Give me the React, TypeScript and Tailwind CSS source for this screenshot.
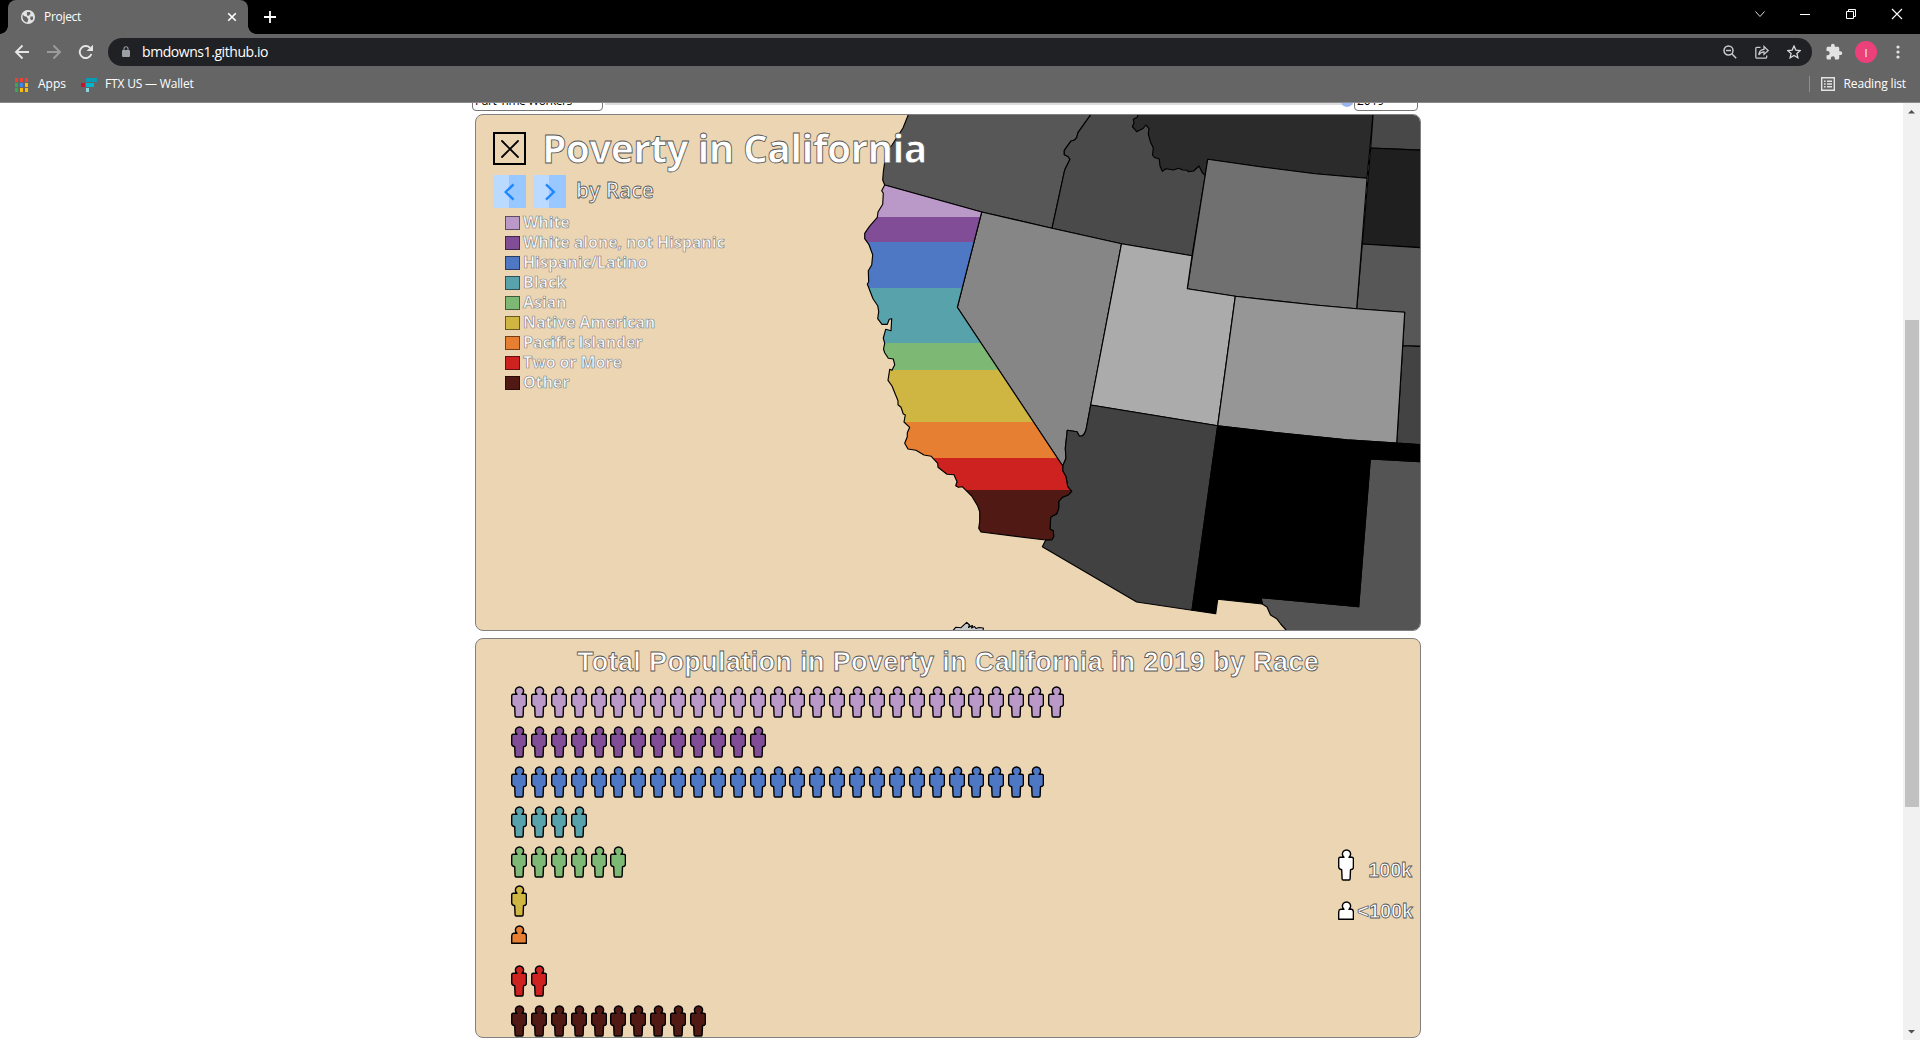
import React from 'react';

const C = {
  white: '#ba98c8',
  purple: '#824d97',
  blue: '#4e78c4',
  teal: '#58a2ac',
  green: '#7eb875',
  yellow: '#cfb541',
  orange: '#e77f33',
  red: '#cd2220',
  dark: '#511913',
};

const legend: [string, string][] = [
  ['White', C.white],
  ['White alone, not Hispanic', C.purple],
  ['Hispanic/Latino', C.blue],
  ['Black', C.teal],
  ['Asian', C.green],
  ['Native American', C.yellow],
  ['Pacific Islander', C.orange],
  ['Two or More', C.red],
  ['Other', C.dark],
];

const rows: { color: string; count: number; half?: boolean }[] = [
  { color: C.white, count: 28 },
  { color: C.purple, count: 13 },
  { color: C.blue, count: 27 },
  { color: C.teal, count: 4 },
  { color: C.green, count: 6 },
  { color: C.yellow, count: 1 },
  { color: C.orange, count: 1, half: true },
  { color: C.red, count: 2 },
  { color: C.dark, count: 10 },
];

const CALIFORNIA =
  '884.7,185 881.7,190.7 883.3,193.3 882.7,204.3 878,212 877.3,217.3 869.3,226.7 864.7,233.3 864.7,238.7 869,244.7 872.7,254.7 871.7,265 868.3,270.7 868.7,282 867.3,284 873,298.7 877.7,305.7 878.7,311.7 877.7,318.7 882,324.3 887.3,324.3 889.3,319.3 891.7,318.7 891,330.7 885.7,329.3 883.3,338 884.7,343.3 883.5,349 884.7,352.7 888.3,358.3 893.3,359 894.7,364.7 892,370.3 889.7,369.3 888,380.3 892,386 898,400.7 898,404.7 901,407.3 903.3,414 905.3,415 904,422 909.7,427.3 907.3,432.7 907.3,436.7 904.7,443.3 908,449 916,450.3 924,455 931.3,456.3 937.7,463.3 938,467.3 947,474.3 954,474.7 957,481.7 955.7,485.7 958.3,487.3 962.3,486.7 971.7,496 977.7,506 979.7,511.7 979.7,521.7 978.7,528.3 981,532 1043.3,539.7 1051.7,539.7 1053.7,536.7 1053.3,530.7 1050,529.3 1050.7,517 1056.7,513.7 1058.7,508.3 1058.7,501.3 1062.3,497.3 1067.7,495.3 1071.7,491.3 1067.7,486.7 1066,476.7 1062.7,470.7 1062.7,466 957.3,307.3 981.7,212';

const states: [string, string][] = [
  ['#575757', '909,113 903,128 892,145 886,152 885,160 883.3,172 882.7,180 884.7,185 981.7,212 1052,228.3 1064.7,170 1070,159.3 1068,156.5 1064.3,154.7 1064.3,150.3 1070.7,141.3 1074.5,140 1076.7,137.7 1078,132.7 1081.7,127.3 1092,113'],
  ['#4a4a4a', '1092,113 1081.7,127.3 1078,132.7 1076.7,137.7 1074.5,140 1070.7,141.3 1064.3,150.3 1064.3,154.7 1068,156.5 1070,159.3 1064.7,170 1052,228.3 1121.5,243.7 1192,255.7 1205.3,175.3 1207,113'],
  ['#2b2b2b', '1138,113 1137.5,117 1133.3,119.3 1134,123 1132.3,126.7 1136.7,131.7 1143,128.5 1146,125 1149,128.7 1148.3,134 1150.5,142 1153.3,148 1152.5,155 1154.5,157.5 1159.3,159 1160,166 1162.3,171.3 1166,168.7 1173.3,170 1178.7,168.3 1182.7,170 1187,170.2 1188.7,171.7 1193.7,171 1199,166 1202.3,172.7 1205.3,175.3 1207.7,159.3 1260,166.7 1315,173.7 1367,178.3 1373.2,113'],
  ['#484848', '1373.2,113 1370.7,148 1422,150.2 1422,113'],
  ['#1f1f1f', '1370.7,148 1422,150.2 1422,247.8 1362.3,244'],
  ['#575757', '1362.3,244 1422,247.8 1422,346.5 1402.7,345.7 1404.7,312.3 1356.7,308.7'],
  ['#434343', '1402.7,345.7 1422,346.5 1422,445 1396.7,443'],
  ['#707070', '1207.7,159.3 1260,166.7 1315,173.7 1367,178.3 1356.7,308.7 1315,305 1235.3,296.3 1187.3,288.7'],
  ['#868686', '981.7,212 1052,228.3 1121.5,243.7 1090.7,405 1086,430 1084.5,433.5 1082.3,436 1079.3,436 1077,431.7 1067.3,430.3 1065.3,448.3 1066,458.3 1062.7,466 957.3,307.3'],
  ['#ababab', '1121.5,243.7 1192,255.7 1187.3,288.7 1235.3,296.3 1217.7,425.7 1090.7,405'],
  ['#969696', '1235.3,296.3 1315,305 1356.7,308.7 1404.7,312.3 1396.7,443 1346.7,439.7 1273.3,432.3 1217.7,425.7'],
  ['#414141', '1090.7,405 1217.7,425.7 1192,610.3 1136.7,602 1042.3,546.7 1045.7,540 1051.7,539.7 1053.7,536.7 1053.3,530.7 1050,529.3 1050.7,517 1056.7,513.7 1058.7,508.3 1058.7,501.3 1062.3,497.3 1067.7,495.3 1071.7,491.3 1067.7,486.7 1066,476.7 1062.7,470.7 1062.7,466 1066,458.3 1065.3,448.3 1067.3,430.3 1077,431.7 1079.3,436 1082.3,436 1084.5,433.5 1086,430'],
  ['#545454', '1370.3,459 1422,461.7 1422,634 1289,634 1286,630 1280.7,624 1276.7,618.7 1270.5,615 1267,607 1262.3,604 1261,597.7 1358.7,606.7'],
  ['#000000', '1217.7,425.7 1273.3,432.3 1346.7,439.7 1396.7,443 1422,444.7 1422,461.7 1370.3,459 1358.7,606.7 1261,597.7 1262.3,604 1217.7,599.3 1215.7,613.7 1192,610.3'],
  ['#c9c9c9', '951,633 955.7,627.3 961,627.7 966.7,622.3 969.5,625 968.5,627.5 971,626 972.5,625.5 971.5,628 974.5,626.5 976,628.5 979,627.5 983.3,628 983,633'],
];

const bands: [number, number, string][] = [
  [180, 217, C.white],
  [217, 242, C.purple],
  [242, 288, C.blue],
  [288, 343, C.teal],
  [343, 370, C.green],
  [370, 422, C.yellow],
  [422, 458, C.orange],
  [458, 490, C.red],
  [490, 545, C.dark],
];

function WestMap() {
  return (
    <svg viewBox="476 115 944 515" className="absolute inset-0 h-full w-full">
      <defs>
        <clipPath id="ca">
          <polygon points={CALIFORNIA} />
        </clipPath>
      </defs>
      <g stroke="#000" strokeWidth="1.15" strokeLinejoin="round">
        {states.map(([fill, points]) => (
          <polygon key={points} points={points} fill={fill} />
        ))}
      </g>
      <g clipPath="url(#ca)" shapeRendering="crispEdges">
        {bands.map(([y0, y1, fill]) => (
          <rect key={fill} x="860" y={y0} width="215" height={y1 - y0} fill={fill} />
        ))}
      </g>
      <polygon points={CALIFORNIA} fill="none" stroke="#000" strokeWidth="1.15" strokeLinejoin="round" />
    </svg>
  );
}

function Person({ color, half }: { color: string; half?: boolean }) {
  return (
    <svg viewBox="0 0 16 32" className="h-8 w-4 shrink-0" fill={color} stroke="#000" strokeWidth="1.4" strokeLinejoin="round">
      {half ? (
        <path d="M6 8.3 A4.1 4.1 0 1 1 11 8.3 H13.6 Q15.4 8.7 15.4 11 V18.3 H.7 V11 Q.8 8.6 2.6 8.3 Z" />
      ) : (
        <path d="M6 8.3 A4.1 4.1 0 1 1 11 8.3 H14 Q15.4 8.4 15.4 9.8 V18.6 Q15.3 20.6 12.5 20.8 L12.1 30 Q12 31 11.2 31 H5.1 Q4.2 31 4.1 30 L3.7 20.8 Q.8 20.2 .7 18 V9.8 Q.8 8.4 2.1 8.3 Z" />
      )}
    </svg>
  );
}

function TabBar() {
  return (
    <div className="flex h-[34px] bg-black text-white">
      <div className="relative ml-2 flex h-[34px] w-60 items-center rounded-t-lg bg-[#656565] pl-[13px] pr-[10px]">
        <span className="absolute -left-2 bottom-0 h-2 w-2 bg-[radial-gradient(circle_at_0_0,#000_7.5px,#656565_8px)]" />
        <span className="absolute -right-2 bottom-0 h-2 w-2 bg-[radial-gradient(circle_at_100%_0,#000_7.5px,#656565_8px)]" />
        <svg viewBox="0 0 14 14" className="h-[14px] w-[14px]">
          <circle cx="7" cy="7" r="7" fill="#e3e4e6" />
          <path d="M2 4.2 Q2.6 6.6 4.6 6.6 Q6.4 6.8 6.3 8.3 Q7.8 8.6 7.2 10 L6.2 12.4 Q2.4 11.8 1.6 8 Q1.2 6 2 4.2 Z M6 2 H9 L9.6 4 Q8.2 4.4 8 5.8 H6.4 Q5.4 4.6 6 2 Z M9.4 6.6 H12 Q12.6 8.8 11 10.6 Q10.2 9.6 9.2 9.2 Z" fill="#656565" />
        </svg>
        <span className="ml-[9px] flex-1 text-xs tracking-[-0.3px]">Project</span>
        <svg viewBox="0 0 12 12" className="h-3 w-3" stroke="#fff" strokeWidth="1.6">
          <path d="M2.2 2.2 L9.8 9.8 M9.8 2.2 L2.2 9.8" />
        </svg>
      </div>
      <svg viewBox="0 0 12 12" className="ml-4 mt-[11px] h-3 w-3" stroke="#fff" strokeWidth="1.8">
        <path d="M6 0 V12 M0 6 H12" />
      </svg>
      <div className="ml-auto mr-[17px] mt-2 flex h-3 items-center gap-[34.5px]">
        <svg viewBox="0 0 12 12" className="h-3 w-3" fill="none" stroke="#ddd">
          <path d="M1.5 3.5 L6 8.5 L10.5 3.5" />
        </svg>
        <svg viewBox="0 0 10 12" className="h-3 w-[10px]" stroke="#fff">
          <path d="M0 6.5 H10" />
        </svg>
        <svg viewBox="0 0 12 12" className="h-3 w-3" fill="none" stroke="#fff">
          <path d="M1.5 3.5 H8.5 V10.5 H1.5 Z M3.5 3.5 V1.5 H10.5 V8.5 H8.5" />
        </svg>
        <svg viewBox="0 0 12 12" className="h-3 w-3" stroke="#fff" strokeWidth="1.1">
          <path d="M1 1 L11 11 M11 1 L1 11" />
        </svg>
      </div>
    </div>
  );
}

function Toolbar() {
  return (
    <div className="flex h-9 items-center bg-[#656565] pl-[14px] pr-3">
      <svg viewBox="0 0 80 16" className="h-4 w-20" fill="none" stroke="#e6e6e6" strokeWidth="1.9">
        <path d="M15 8 H2 M8.5 1.5 L2 8 L8.5 14.5" />
        <path d="M33 8 H46 M39.5 1.5 L46 8 L39.5 14.5" stroke="#9c9c9c" />
        <path d="M77.4 10 A6 6 0 1 1 76 3.8" />
        <path d="M79 .8 V7 H72.6 Z" fill="#e6e6e6" stroke="none" />
      </svg>
      <div className="ml-[14px] flex h-7 flex-1 items-center rounded-full bg-[#202124] pl-[14px] pr-[11px] text-white">
        <svg viewBox="0 0 8 12" className="h-3 w-2">
          <rect y="4" width="8" height="7" rx="1" fill="#9aa0a6" />
          <path d="M2 4 V2.8 A2 2 0 0 1 6 2.8 V4" fill="none" stroke="#9aa0a6" strokeWidth="1.1" />
        </svg>
        <span className="ml-[12px] flex-1 text-[14px] leading-none tracking-[-0.43px]">bmdowns1.github.io</span>
        <div className="flex items-center gap-[18px]">
          <svg viewBox="0 0 14 14" className="h-[14px] w-[14px]" fill="none" stroke="#c8cacd" strokeWidth="1.5">
            <circle cx="5.5" cy="5.5" r="4.5" />
            <path d="M8.8 8.8 L13.2 13.2 M3 5.5 H8" />
          </svg>
          <svg viewBox="0 0 14 14" className="h-[14px] w-[14px]" fill="none" stroke="#c8cacd" strokeWidth="1.3">
            <path d="M5.5 2.3 H2 Q.8 2.3 .8 3.5 V12 Q.8 13.2 2 13.2 H10.5 Q11.7 13.2 11.7 12 V10.5" />
            <path d="M3.8 10 Q4.2 4.6 9 4.4 V1.6 L13.2 5.6 L9 9.4 V6.8 Q5.6 6.8 3.8 10 Z" />
          </svg>
          <svg viewBox="0 0 14 14" className="h-[14px] w-[14px]" fill="none" stroke="#d5d7da" strokeWidth="1.3">
            <path d="M7 1 L8.8 5.1 L13.2 5.5 L9.9 8.4 L10.9 12.8 L7 10.5 L3.1 12.8 L4.1 8.4 L.8 5.5 L5.2 5.1 Z" />
          </svg>
        </div>
      </div>
      <svg viewBox="0 0 24 24" className="ml-[13px] h-[18px] w-[18px]" fill="#e3e3e3">
        <path d="M20.5 11H19V7c0-1.1-.9-2-2-2h-4V3.5C13 2.12 11.88 1 10.5 1S8 2.12 8 3.5V5H4c-1.1 0-1.99.9-1.99 2v3.8H3.5c1.49 0 2.7 1.21 2.7 2.7s-1.21 2.7-2.7 2.7H2V20c0 1.1.9 2 2 2h3.8v-1.5c0-1.49 1.21-2.7 2.7-2.7 1.49 0 2.7 1.21 2.7 2.7V22H17c1.1 0 2-.9 2-2v-4h1.5c1.38 0 2.5-1.12 2.5-2.5S21.88 11 20.5 11z" />
      </svg>
      <span className="ml-[12px] flex h-[22px] w-[22px] items-center justify-center rounded-full bg-[#ec407a] text-[11px] leading-none text-white">I</span>
      <svg viewBox="0 0 4 14" className="ml-[19px] mr-[8px] h-[14px] w-1" fill="#e3e3e3">
        <circle cx="2" cy="2" r="1.6" />
        <circle cx="2" cy="7" r="1.6" />
        <circle cx="2" cy="12" r="1.6" />
      </svg>
    </div>
  );
}

const appColors = ['#ea4335', '#ea4335', '#ea4335', '#34a853', '#4285f4', '#fbbc04', '#34a853', '#fbbc04', '#fbbc04'];

function Bookmarks() {
  return (
    <div className="flex h-[33px] items-center border-b border-[#8a8a8a] bg-[#656565] pl-[15px] pr-[14px] pb-[5px] text-xs text-white">
      <div className="mt-[2px] grid grid-cols-3 gap-x-[2px] gap-y-px">
        {appColors.map((c, i) => (
          <span key={i} className="h-1 w-[3px]" style={{ background: c }} />
        ))}
      </div>
      <span className="ml-[10px] w-7">Apps</span>
      <svg viewBox="0 0 16 14" className="ml-[15px] mt-[2px] h-[14px] w-4">
        <path d="M5 0 H16 V4 H5 Z" fill="#0a9cb4" />
        <path d="M5 5 H13 V9 H5 Z" fill="#02b5cf" />
        <path d="M5 10 H8 V14 H5 Z" fill="#8fd3de" />
        <path d="M0 5 H4 V9 H0 Z" fill="#c4122f" />
      </svg>
      <span className="ml-2 tracking-[-0.18px]">FTX US — Wallet</span>
      <span className="ml-auto h-4 w-px bg-[#8d8d8d]" />
      <svg viewBox="0 0 14 14" className="ml-[11px] h-[14px] w-[14px]" fill="none" stroke="#e3e3e3" strokeWidth="1.4">
        <path d="M.7 .7 H13.3 V13.3 H.7 Z M3 4.3 H4.6 M6 4.3 H11 M3 7 H4.6 M6 7 H11 M3 9.7 H4.6 M6 9.7 H11" />
      </svg>
      <span className="ml-[9px] tracking-[-0.15px]">Reading list</span>
    </div>
  );
}

function Arrow({ right }: { right?: boolean }) {
  return (
    <span className="flex h-[33px] w-[33px] items-center justify-center bg-linear-to-r from-[#bbdaff] from-50% to-[#99c7ff] to-50%">
      <svg viewBox="0 0 12 18" className="h-[18px] w-3" fill="none" stroke="#1f88ff" strokeWidth="2.4">
        <path d={right ? 'M2 1.3 L9.8 9 L2 16.7' : 'M9.5 1.3 L1.7 9 L9.5 16.7'} />
      </svg>
    </span>
  );
}

const outline = '[-webkit-text-stroke:0.8px_#555]';

export default function App() {
  return (
    <div className="flex h-[1040px] w-[1920px] flex-col overflow-hidden bg-white font-['Open_Sans','Noto_Sans',sans-serif]">
      <TabBar />
      <Toolbar />
      <Bookmarks />
      <div className="flex min-h-0 flex-1">
        <main className="flex flex-1 flex-col pl-[475px]">
          <div className="-ml-[3px] flex h-[11px] w-[949px] items-start overflow-hidden text-black">
            <div className="-mt-[13px] flex h-[21px] w-[131px] shrink-0 items-center rounded-sm border border-[#767676] pl-[2px] text-[12px] leading-none tracking-[-0.45px]">Part-Time Workers</div>
            <div className="ml-[2px] h-[2px] flex-1 bg-[#dcdcdc]" />
            <span className="-ml-3 -mt-[8px] h-3 w-3 rounded-full bg-[#99b5f0]" />
            <div className="-mt-[13px] ml-[1px] mr-[3px] flex h-[21px] w-16 items-center rounded-sm border border-[#767676] pl-[2px] text-[12px] leading-none">2019</div>
          </div>
          <section className="relative h-[517px] w-[946px] overflow-hidden rounded-lg border border-[#808080] bg-[#ebd5b3]">
            <WestMap />
            <div className="relative flex flex-col pl-[17px] pt-[17px]">
              <div className="flex h-[33px] items-center">
                <span className="flex h-[33px] w-[33px] items-center justify-center border-2 border-black">
                  <svg viewBox="0 0 18 18" className="h-[18px] w-[18px]" stroke="#000" strokeWidth="1.8" strokeLinecap="round">
                    <path d="M1 1 L17 17 M17 1 L1 17" />
                  </svg>
                </span>
                <h1 className={`-mt-[2px] ml-[16px] whitespace-nowrap text-[39px] font-bold leading-none tracking-[-0.67px] text-white ${outline}`}>Poverty in California</h1>
              </div>
              <div className="mt-[10px] flex h-[33px] items-center">
                <Arrow />
                <span className="w-[7px]" />
                <Arrow right />
                <h2 className={`-mt-[2px] ml-[10px] text-[21px] font-semibold leading-none text-white ${outline}`}>by Race</h2>
              </div>
              <ul className="mt-[5px] ml-[12px]">
                {legend.map(([label, color]) => (
                  <li key={label} className="flex h-5 items-center">
                    <span className="h-[14px] w-[15px] border border-black/50" style={{ background: color }} />
                    <span className="-mt-[2px] ml-[3px] whitespace-nowrap text-[16px] font-bold leading-none tracking-[-0.12px] text-white [-webkit-text-stroke:0.7px_#888]">{label}</span>
                  </li>
                ))}
              </ul>
            </div>
          </section>
          <section className="relative mt-[7px] h-[400px] w-[946px] overflow-hidden rounded-lg border border-[#808080] bg-[#ebd5b3] font-['Liberation_Sans',Arial,sans-serif] font-bold text-white">
            <h2 className={`pt-[9px] text-center text-[27px] leading-[28px] tracking-[0.37px] ${outline}`}>Total Population in Poverty in California in 2019 by Race</h2>
            <div className="ml-[35px] mt-[10px]">
              {rows.map((row) => (
                <div key={row.color} className="flex h-[39.9px] gap-[3.9px]">
                  {Array.from({ length: row.count }, (_, i) => (
                    <Person key={i} color={row.color} half={row.half} />
                  ))}
                </div>
              ))}
            </div>
            <div className="absolute right-[7px] top-[210px] flex flex-col gap-[20px] text-[20px]">
              <div className="flex h-8 items-center">
                <Person color="#fff" />
                <span className={`ml-[14px] mt-[10px] leading-none tracking-[-0.2px] ${outline}`}>100k</span>
              </div>
              <div className="flex h-8">
                <Person color="#fff" half />
                <span className={`ml-[3px] leading-none tracking-[-0.1px] ${outline}`}>&lt;100k</span>
              </div>
            </div>
          </section>
        </main>
        <aside className="flex w-[17px] flex-col items-center bg-[#f1f1f1]">
          <svg viewBox="0 0 17 17" className="h-[17px] w-[17px]">
            <path d="M5 10.5 L8.5 7 L12 10.5 Z" fill="#505050" />
          </svg>
          <div className="mt-[200px] h-[487px] w-[14px] bg-[#c1c1c1]" />
          <span className="flex-1" />
          <svg viewBox="0 0 17 17" className="h-[17px] w-[17px]">
            <path d="M5 7 L8.5 10.5 L12 7 Z" fill="#505050" />
          </svg>
        </aside>
      </div>
    </div>
  );
}
